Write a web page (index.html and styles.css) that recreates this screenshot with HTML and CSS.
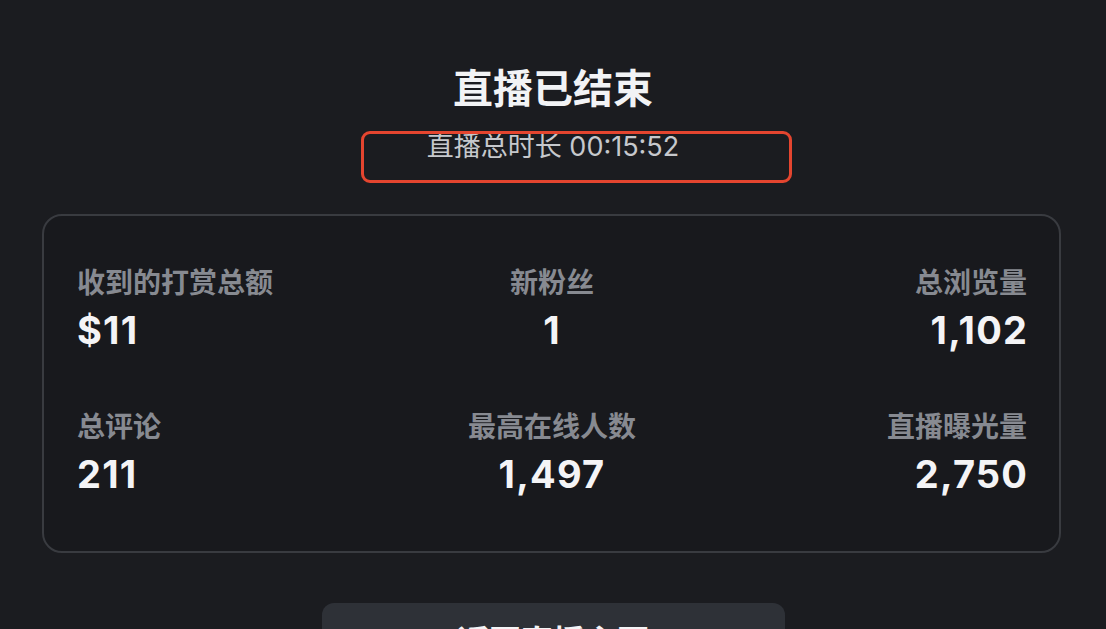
FILE: index.html
```html
<!DOCTYPE html>
<html lang="zh-CN">
<head>
<meta charset="utf-8">
<title>直播已结束</title>
<link rel="stylesheet" href="styles.css">
</head>
<body>
<main class="page">
  <h1 class="title">直播已结束</h1>
  <p class="duration">直播总时长 00:15:52</p>
  <div class="highlight"></div>
  <section class="stats">
    <div class="stat left">
      <div class="label">收到的打赏总额</div>
      <div class="value">$11</div>
    </div>
    <div class="stat center">
      <div class="label">新粉丝</div>
      <div class="value">1</div>
    </div>
    <div class="stat right">
      <div class="label">总浏览量</div>
      <div class="value">1,102</div>
    </div>
    <div class="stat left">
      <div class="label">总评论</div>
      <div class="value">211</div>
    </div>
    <div class="stat center">
      <div class="label">最高在线人数</div>
      <div class="value">1,497</div>
    </div>
    <div class="stat right">
      <div class="label">直播曝光量</div>
      <div class="value">2,750</div>
    </div>
  </section>
  <button class="action">返回直播主页</button>
</main>
</body>
</html>
```

FILE: styles.css
```css
html, body {
  margin: 0;
  padding: 0;
  background: #1b1c20;
}
body {
  overflow: hidden;
  height: 629px;
}
.page {
  position: relative;
  display: flex;
  flex-direction: column;
  align-items: center;
  padding-top: 62px;
}
.title {
  margin: 0;
  font-family: "Noto Sans CJK SC", sans-serif;
  font-weight: 700;
  font-size: 40px;
  line-height: 48px;
  color: #f2f3f5;
}
.duration {
  margin: 21px 0 0;
  font-family: Inter, "Noto Sans CJK SC", sans-serif;
  font-size: 27px;
  line-height: 32px;
  color: #c6c8cc;
}
.highlight {
  position: absolute;
  left: 361px;
  top: 131px;
  width: 425px;
  height: 46px;
  border: 3px solid #e4452f;
  border-radius: 9px;
}
.stats {
  margin-top: 51px;
  align-self: flex-start;
  margin-left: 42px;
  width: 1019px;
  box-sizing: border-box;
  border: 2px solid #393b40;
  border-radius: 20px;
  background: #18191d;
  padding: 47px 32px 55px 33px;
  display: grid;
  grid-template-columns: 1fr 1fr 1fr;
  row-gap: 55px;
}
.stat {
  display: flex;
  flex-direction: column;
}
.stat.left { align-items: flex-start; }
.stat.center { align-items: center; }
.stat.right { align-items: flex-end; }
.label {
  font-family: "Noto Sans CJK SC", sans-serif;
  font-weight: 700;
  font-size: 28px;
  line-height: 36px;
  color: #878a91;
}
.value {
  margin-top: 9px;
  font-family: Inter, sans-serif;
  font-weight: 700;
  font-size: 38px;
  line-height: 44px;
  letter-spacing: 1.2px;
  color: #f4f4f6;
}
.stat.right .value {
  margin-right: -1.2px;
}
.action {
  margin-top: 50px;
  width: 463px;
  height: 68px;
  border: none;
  border-radius: 12px;
  background: #2e3137;
  color: #f4f4f6;
  font-family: "Noto Sans CJK SC", sans-serif;
  font-weight: 700;
  font-size: 32px;
  line-height: 40px;
  padding: 16px 0 12px;
}
```
